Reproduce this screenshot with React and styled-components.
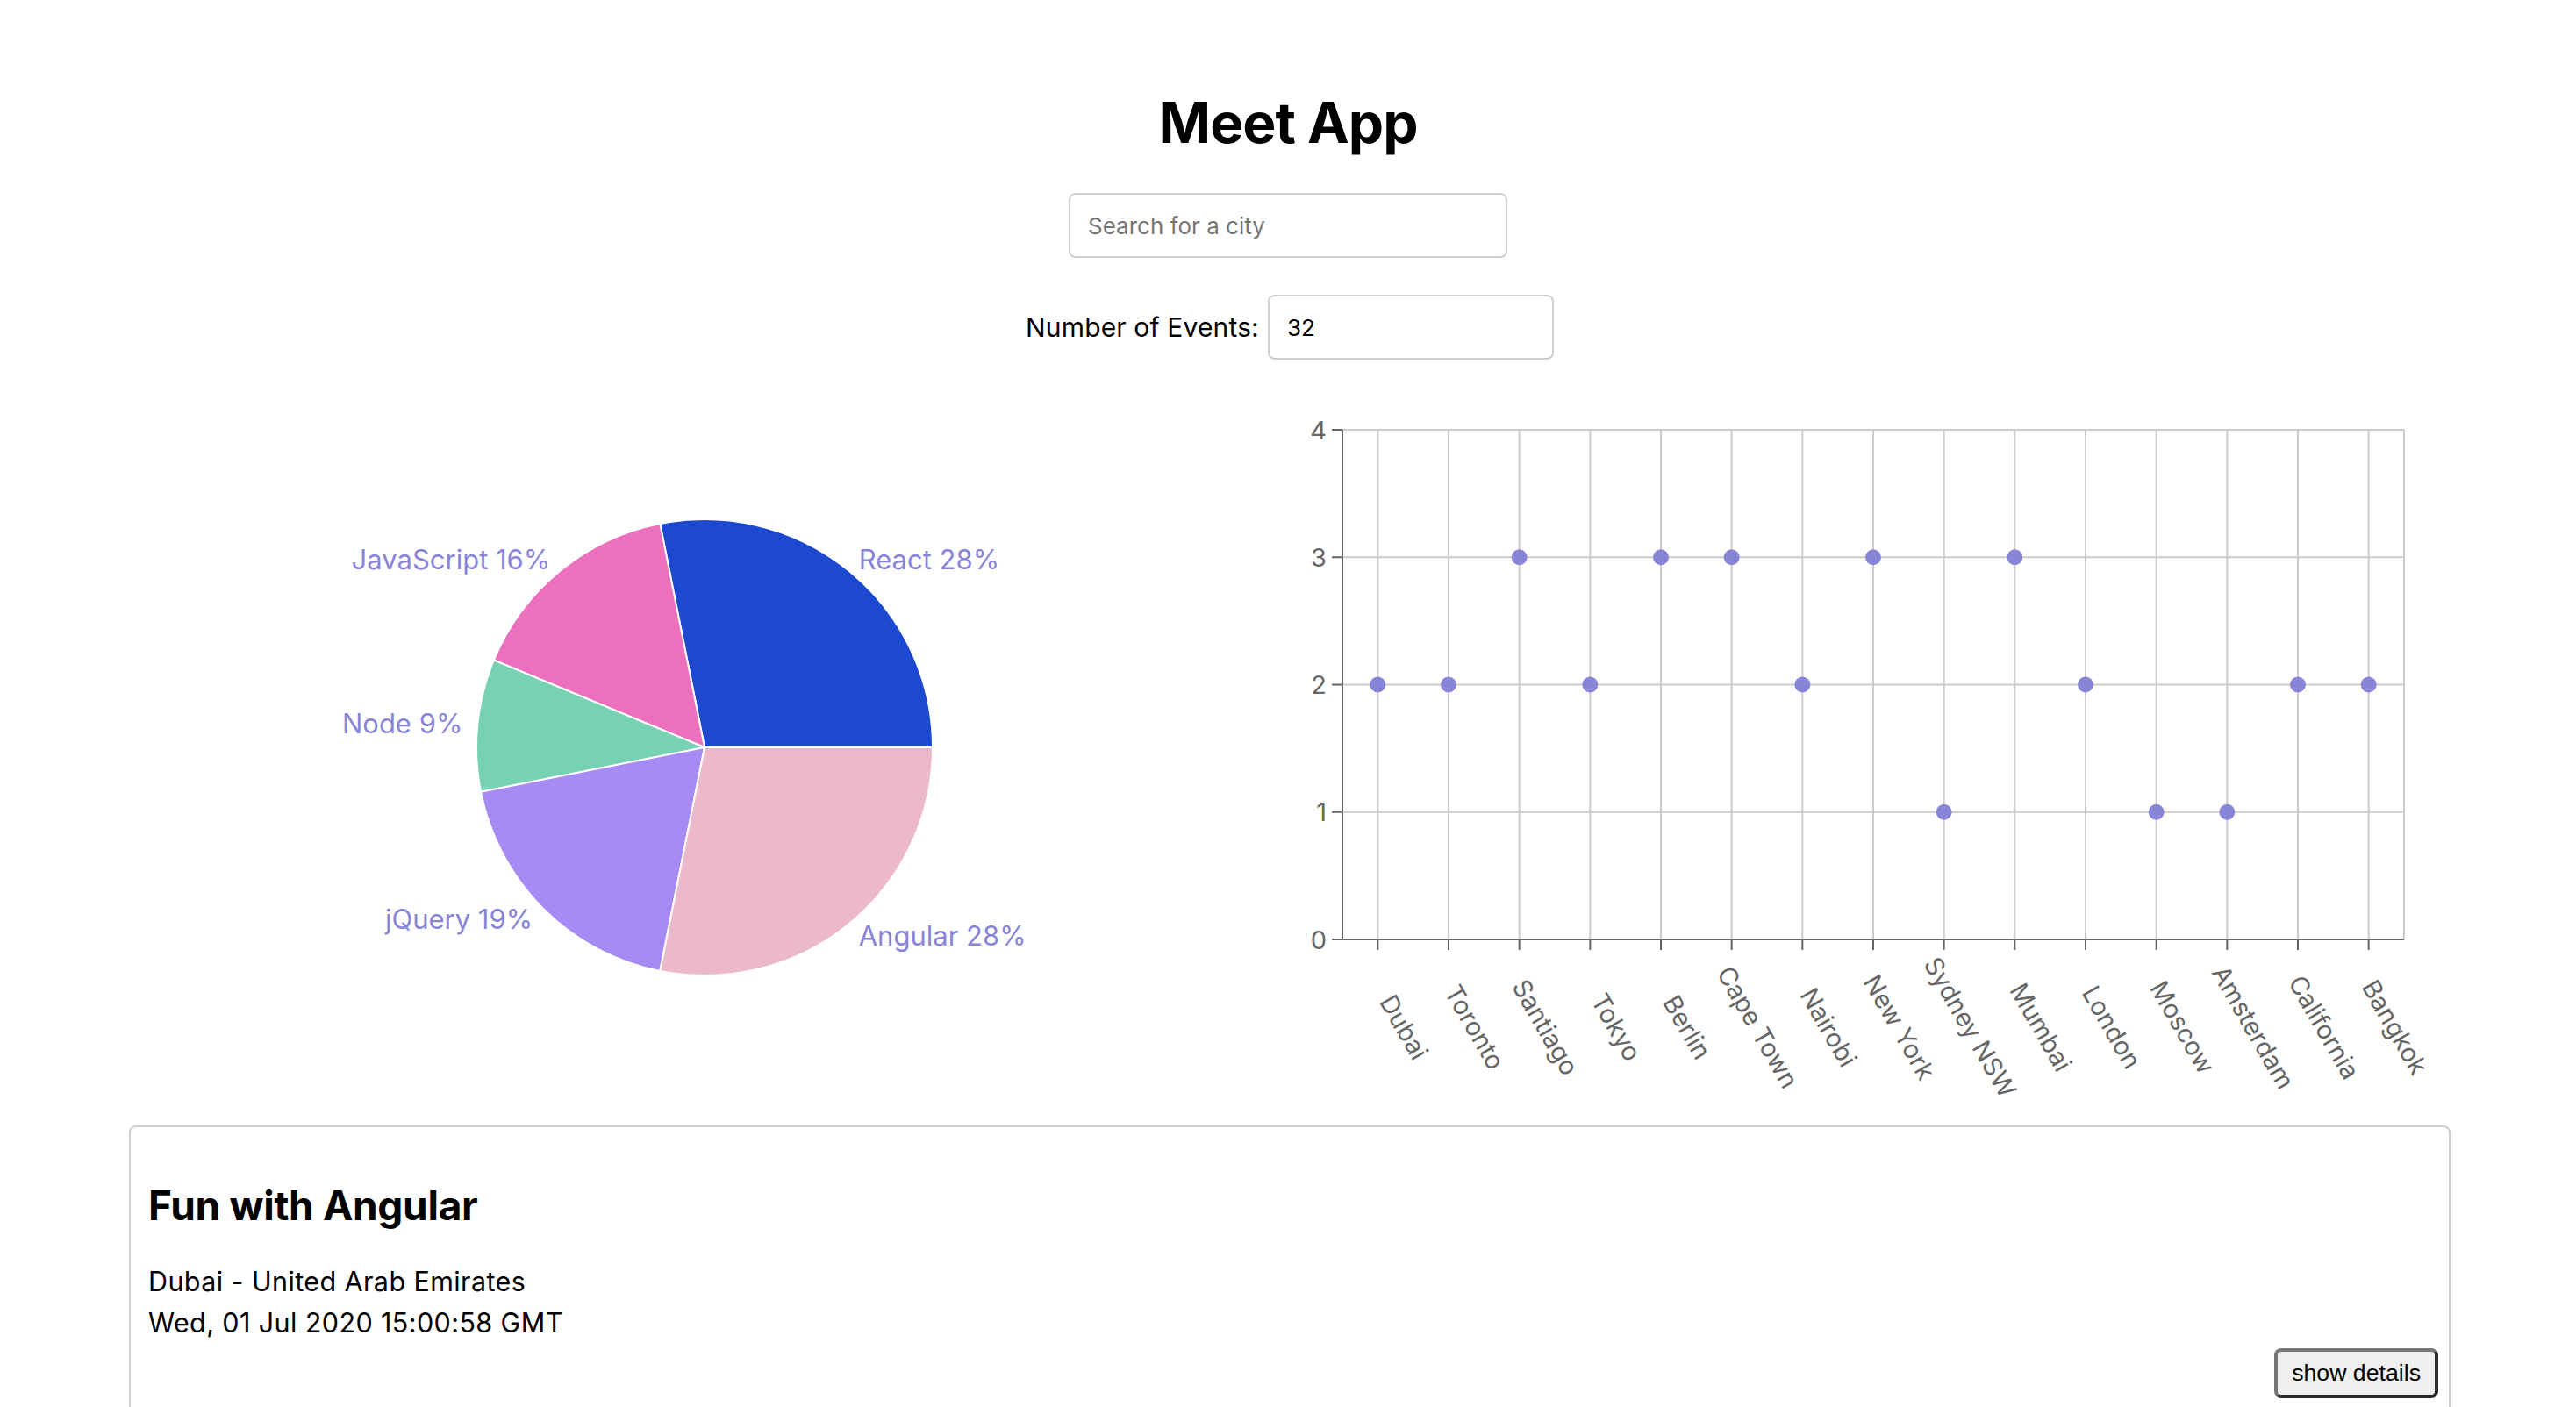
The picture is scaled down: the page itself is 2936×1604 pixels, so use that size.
import React from "react";
import styled, { createGlobalStyle } from "styled-components";

const GlobalStyle = createGlobalStyle`
  html, body { margin: 0; padding: 0; background: #ffffff; }
  body {
    font-family: Inter, "Noto Sans", "DejaVu Sans", sans-serif;
    color: #000000;
  }
  * { box-sizing: border-box; }
`;

const Page = styled.div`
  padding-top: 102px;
  text-align: center;
`;

const Title = styled.h1`
  margin: 0;
  font-size: 64px;
  line-height: 76px;
  font-weight: 700;
  letter-spacing: -1px;
`;

const SearchWrap = styled.div`
  display: flex;
  justify-content: center;
  margin-top: 42px;
`;

const TextInput = styled.input`
  height: 74px;
  width: ${(p) => p.$w}px;
  border: 2px solid #cfcfcf;
  border-radius: 8px;
  padding: 0 20px;
  font-family: Inter, "Noto Sans", sans-serif;
  font-size: 26px;
  color: #000;
  background: #fff;
  outline: none;
  &::placeholder { color: #757575; }
`;

const NumberRow = styled.div`
  display: flex;
  justify-content: center;
  align-items: center;
  gap: 10px;
  margin-top: 42px;
  padding-left: 4px;
`;

const NumberLabel = styled.label`
  font-size: 30px;
  letter-spacing: 0.15px;
`;

const ChartsRow = styled.div`
  width: 2644px;
  margin: 40px auto 0;
  display: grid;
  grid-template-columns: 1fr 1fr;
  height: 810px;
`;

const ChartPanel = styled.div`
  width: 100%;
  height: 100%;
`;

const ChartSvg = styled.svg`
  display: block;
  width: 1322px;
  height: 810px;
  font-family: Inter, "Noto Sans", sans-serif;
`;

const PieLabel = styled.text`
  font-size: 31px;
  fill: #8884d8;
`;

const AxisText = styled.text`
  font-size: 29px;
  fill: #666666;
`;

const EventCard = styled.div`
  width: 2646px;
  margin: 23px 0 0 147px;
  border: 2px solid #cfcfcf;
  border-radius: 8px;
  padding: 62px 12px 20px 20px;
  text-align: left;
`;

const EventTitle = styled.h2`
  margin: 0;
  font-size: 46px;
  line-height: 54px;
  font-weight: 700;
  letter-spacing: -0.3px;
`;

const EventDetails = styled.div`
  margin-top: 36px;
  font-size: 30.5px;
  line-height: 47px;
  letter-spacing: 0.4px;
`;

const ButtonRow = styled.div`
  display: flex;
  justify-content: flex-end;
  margin-top: 6px;
`;

const DetailsButton = styled.button`
  font-family: "Liberation Sans", Arial, sans-serif;
  font-size: 26.7px;
  color: #000;
  background: #efefef;
  border-style: solid;
  border-width: 4px;
  border-color: #767676 #2a2a2a #2a2a2a #767676;
  border-radius: 8px;
  padding: 8px 16px;
  height: 57px;
  cursor: pointer;
`;

const pieData = [
  { name: "React", value: 9, color: "#1D49D0" },
  { name: "JavaScript", value: 5, color: "#EC70BE" },
  { name: "Node", value: 3, color: "#77D1B4" },
  { name: "jQuery", value: 6, color: "#A78BF5" },
  { name: "Angular", value: 9, color: "#ECB8CB" },
];

const cities = [
  ["Dubai", 2], ["Toronto", 2], ["Santiago", 3], ["Tokyo", 2], ["Berlin", 3],
  ["Cape Town", 3], ["Nairobi", 2], ["New York", 3], ["Sydney NSW", 1], ["Mumbai", 3],
  ["London", 2], ["Moscow", 1], ["Amsterdam", 1], ["California", 2], ["Bangkok", 2],
];

function PieChart() {
  const cx = 657, cy = 402, r = 260, lr = 277;
  const total = pieData.reduce((s, d) => s + d.value, 0);
  let start = 0;
  const pt = (a, rad) => [cx + rad * Math.cos((a * Math.PI) / 180), cy - rad * Math.sin((a * Math.PI) / 180)];
  const slices = pieData.map((d) => {
    const sweep = (d.value / total) * 360;
    const a1 = start, a2 = start + sweep;
    start = a2;
    const [x1, y1] = pt(a1, r);
    const [x2, y2] = pt(a2, r);
    const large = sweep > 180 ? 1 : 0;
    const mid = (a1 + a2) / 2;
    const [lx, ly] = pt(mid, lr);
    return {
      ...d,
      path: `M ${cx} ${cy} L ${x1} ${y1} A ${r} ${r} 0 ${large} 0 ${x2} ${y2} Z`,
      lx, ly,
      anchor: lx > cx ? "start" : "end",
      pct: Math.round((d.value / total) * 100),
    };
  });
  return (
    <ChartSvg viewBox="0 0 1322 810">
      {slices.map((s) => (
        <path key={s.name} d={s.path} fill={s.color} stroke="#fff" strokeWidth="2" />
      ))}
      {slices.map((s) => (
        <PieLabel key={s.name + "l"} x={s.lx} y={s.ly} textAnchor={s.anchor} dominantBaseline="central">
          {`${s.name} ${s.pct}%`}
        </PieLabel>
      ))}
    </ChartSvg>
  );
}

function ScatterChart() {
  const left = 62, right = 1272, top = 40, bottom = 621;
  const band = (right - left) / cities.length;
  const xs = cities.map((_, i) => left + band * (i + 0.5));
  const yv = (v) => bottom - (v * (bottom - top)) / 4;
  return (
    <ChartSvg viewBox="0 0 1322 810">
      {[1, 2, 3, 4].map((v) => (
        <line key={"h" + v} x1={left} x2={right} y1={yv(v)} y2={yv(v)} stroke="#ccc" strokeWidth="2" />
      ))}
      {xs.map((x, i) => (
        <line key={"v" + i} x1={x} x2={x} y1={top} y2={bottom} stroke="#ccc" strokeWidth="2" />
      ))}
      <line x1={right} x2={right} y1={top} y2={bottom} stroke="#ccc" strokeWidth="2" />
      <line x1={left} x2={left} y1={top} y2={bottom} stroke="#666" strokeWidth="2" />
      <line x1={left} x2={right} y1={bottom} y2={bottom} stroke="#666" strokeWidth="2" />
      {[0, 1, 2, 3, 4].map((v) => (
        <g key={"yt" + v}>
          <line x1={left - 12} x2={left} y1={yv(v)} y2={yv(v)} stroke="#666" strokeWidth="2" />
          <AxisText x={left - 18} y={yv(v)} textAnchor="end" dominantBaseline="central">{v}</AxisText>
        </g>
      ))}
      {xs.map((x, i) => (
        <g key={"xt" + i}>
          <line x1={x} x2={x} y1={bottom} y2={bottom + 12} stroke="#666" strokeWidth="2" />
          <AxisText
            x={x + 30}
            y={721}
            textAnchor="middle"
            dominantBaseline="central"
            transform={`rotate(60, ${x + 30}, 721)`}
          >
            {cities[i][0]}
          </AxisText>
        </g>
      ))}
      {xs.map((x, i) => (
        <circle key={"d" + i} cx={x} cy={yv(cities[i][1])} r="9" fill="#8884d8" />
      ))}
    </ChartSvg>
  );
}

export default function App() {
  return (
    <>
      <GlobalStyle />
      <Page>
        <Title>Meet App</Title>
        <SearchWrap>
          <TextInput $w={500} type="text" placeholder="Search for a city" />
        </SearchWrap>
        <NumberRow>
          <NumberLabel>Number of Events:</NumberLabel>
          <TextInput $w={326} type="number" defaultValue={32} />
        </NumberRow>
        <ChartsRow>
          <ChartPanel>
            <PieChart />
          </ChartPanel>
          <ChartPanel>
            <ScatterChart />
          </ChartPanel>
        </ChartsRow>
        <EventCard>
          <EventTitle>Fun with Angular</EventTitle>
          <EventDetails>
            <div>Dubai - United Arab Emirates</div>
            <div>Wed, 01 Jul 2020 15:00:58 GMT</div>
          </EventDetails>
          <ButtonRow>
            <DetailsButton>show details</DetailsButton>
          </ButtonRow>
        </EventCard>
      </Page>
    </>
  );
}
